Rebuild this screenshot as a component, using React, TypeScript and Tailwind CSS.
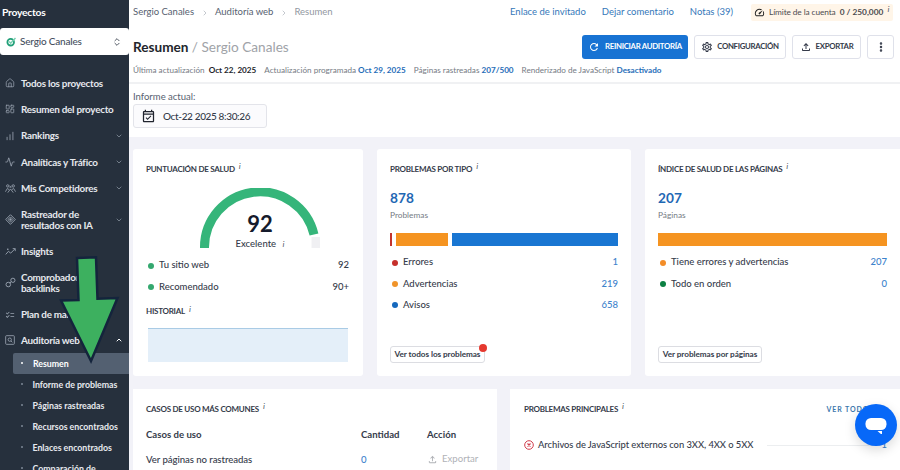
import type { ReactNode } from 'react';
import {
  Activity,
  ChartNoAxesColumnIncreasing,
  ChevronDown,
  ChevronRight,
  ChevronUp,
  ChevronsUpDown,
  EllipsisVertical,
  House,
  LayoutDashboard,
} from 'lucide-react';
import {
  MdOutlineChecklist,
  MdOutlineEventAvailable,
  MdOutlineFileUpload,
  MdOutlineSettings,
  MdOutlineSpeed,
  MdRefresh,
} from 'react-icons/md';

const icon = 'size-[10px] text-[#9aa4b1]';

const navItems = [
  { label: 'Todos los proyectos', icon: <House className={icon} strokeWidth={1.8} /> },
  { label: 'Resumen del proyecto', icon: <LayoutDashboard className={icon} strokeWidth={1.8} /> },
  { label: 'Rankings', icon: <ChartNoAxesColumnIncreasing className={icon} strokeWidth={2} />, chevron: true },
  { label: 'Analíticas y Tráfico', icon: <Activity className={icon} strokeWidth={2} />, chevron: true },
  { label: 'Mis Competidores', icon: <CompetitorsIcon />, chevron: true },
  { label: 'Rastreador de resultados con IA', icon: <AiIcon />, chevron: true, tall: true },
  { label: 'Insights', icon: <InsightsIcon /> },
  { label: 'Comprobador de backlinks', icon: <BacklinksIcon />, tall: true },
  { label: 'Plan de marketing', icon: <MdOutlineChecklist className={icon} /> },
];

const subItems = [
  'Informe de problemas',
  'Páginas rastreadas',
  'Recursos encontrados',
  'Enlaces encontrados',
  'Comparación de',
];

function CompetitorsIcon() {
  return (
    <svg viewBox="0 0 12 12" className="size-[11px] text-[#9aa4b1]" fill="none" stroke="currentColor" strokeWidth=".9">
      <circle cx="3" cy="3.2" r="1.3" />
      <circle cx="9" cy="3.2" r="1.3" />
      <path d="M.5 9.5 2.5 6l2 1.2M11.5 9.5 9.5 6l-2 1.2M3 10.5 6 6.5l3 4" />
      <path d="m5 3.5 2 1.5m0-1.5L5 5" />
    </svg>
  );
}

function AiIcon() {
  return (
    <svg viewBox="0 0 12 12" className="size-[11px] text-[#9aa4b1]" fill="none" stroke="currentColor">
      <path d="M6 .8 11.2 6 6 11.2.8 6Z" />
      <path d="M6 3.2 8.8 6 6 8.8 3.2 6Z" />
      <circle cx="6" cy="6" r=".8" fill="currentColor" />
    </svg>
  );
}

function InsightsIcon() {
  return (
    <svg viewBox="0 0 12 12" className="size-[11px] text-[#9aa4b1]" fill="none" stroke="currentColor">
      <path d="m.8 9.2 3-3.4 2.4 2 4.6-4.6" />
      <path d="M8.4 2.8h2.8v2.8M2.2 3.6h1.6M3 2.8v1.6" strokeWidth=".9" />
    </svg>
  );
}

function BacklinksIcon() {
  return (
    <svg viewBox="0 0 12 12" className="size-[11px] text-[#9aa4b1]" fill="none" stroke="currentColor">
      <circle cx="3.6" cy="8.2" r="2.5" />
      <circle cx="8.6" cy="3.6" r="2.3" />
      <path d="m5.2 6.6 1.8-1.6" />
    </svg>
  );
}

function AuditIcon() {
  return (
    <svg viewBox="0 0 12 12" className="size-[10px] text-[#9aa4b1]" fill="none" stroke="currentColor">
      <rect x=".8" y=".8" width="10.4" height="10.4" rx="1" />
      <circle cx="5.7" cy="5.6" r="2" />
      <path d="m7.2 7.2 1.6 1.6" />
    </svg>
  );
}

function Info({ className = '' }: { className?: string }) {
  return <span className={`ml-[4px] text-[8.5px] italic font-normal text-[#555b66] ${className}`}>i</span>;
}

function CardTitle({ children }: { children: ReactNode }) {
  return (
    <div className="flex h-[12px] items-center text-[8px] font-bold text-[#353b4a]">
      <span className="tracking-[-0.26px]">{children}</span>
      <Info className="-mt-[5px]" />
    </div>
  );
}

function Row({ dot, label, value, link = true }: { dot: string; label: string; value: string; link?: boolean }) {
  return (
    <div className="flex h-[21.2px] items-center text-[9.5px] font-medium text-[#353b4a]">
      <span className={`ml-[2px] mr-[5px] size-[6px] rounded-full ${dot}`} />
      <span>{label}</span>
      <span className={`ml-auto ${link ? 'text-[#3c82cc]' : ''}`}>{value}</span>
    </div>
  );
}

function Sidebar() {
  return (
    <aside className="relative h-full w-[129px] shrink-0 overflow-hidden bg-[#26303d] text-[9.9px] font-bold text-[#e6e9ee]">
      <div className="flex h-[28px] items-center pl-[2px] pb-[3px] text-[10.3px] tracking-[-0.25px] text-white">Proyectos</div>
      <div className="flex h-[27px] items-center rounded-[3px] bg-white pl-[6px] pr-[7px] font-medium text-[#454f60]">
        <svg viewBox="0 0 10 10" className="mr-[4px] size-[10px]" fill="none">
          <circle cx="4.7" cy="5.2" r="3.3" stroke="#22a079" strokeWidth="1.8" />
          <path d="m3.2 4.5 1.5 1.7L9.5 1" stroke="#77cfb0" strokeWidth="1.4" />
        </svg>
        <span className="text-[10px] tracking-[-0.2px]">Sergio Canales</span>
        <ChevronsUpDown className="ml-auto size-[10px] text-[#333b48]" />
      </div>
      <nav className="mt-[15px]">
        {navItems.map((item) => (
          <div key={item.label} className={`flex items-center pl-[5px] pr-[6px] ${item.tall ? 'h-[36.8px]' : 'h-[26.3px]'}`}>
            <span className="flex w-[16px] shrink-0">{item.icon}</span>
            <span className={`leading-[10.5px] tracking-[-0.25px] ${item.tall ? 'w-[78px]' : 'whitespace-nowrap'}`}>{item.label}</span>
            {item.chevron && <ChevronDown className="ml-auto size-[8px] text-[#9aa4b1]" />}
          </div>
        ))}
        <div className="flex h-[25px] items-center pl-[5px] pr-[6px]">
          <span className="w-[16px]"><AuditIcon /></span>
          <span className="tracking-[-0.25px]">Auditoría web</span>
          <ChevronUp className="ml-auto size-[8px] text-white" strokeWidth={3} />
        </div>
        <div className="ml-[13px] text-[8.8px] tracking-[-0.04px]">
          <div className="flex h-[21px] items-center rounded-l-[2px] bg-[#536071] pl-[8px] text-white">
            <span className="mr-[10px] size-[2px] rounded-full bg-white" />
            Resumen
          </div>
          {subItems.map((item) => (
            <div key={item} className="flex h-[21px] items-center whitespace-nowrap pl-[8px]">
              <span className="mr-[10px] size-[1.5px] rounded-full bg-[#7c8796]" />
              {item}
            </div>
          ))}
        </div>
      </nav>
      {/* Pointer to the active entry */}
      <svg viewBox="0 0 129 120" className="absolute left-0 top-[250px] h-[120px] w-[129px]">
        <path d="M77 8 96 7.2 97.5 48.8 117.5 48 91 111 61 50.5 78.5 50Z" fill="#3db05f" stroke="#14243c" strokeWidth="2.5" />
      </svg>
    </aside>
  );
}

function Header() {
  return (
    <header className="h-[84px] shrink-0 border-b-2 border-[#f0f1f3] bg-white pl-[4px]">
      <div className="flex h-[25px] items-center whitespace-nowrap text-[9.5px] text-[#566170]">
        <span>Sergio Canales</span>
        <ChevronRight className="mx-[6.5px] size-[8px] text-[#a7adb7]" />
        <span>Auditoría web</span>
        <ChevronRight className="mx-[6.5px] size-[8px] text-[#a7adb7]" />
        <span className="text-[#9298a1]">Resumen</span>
        <div className="ml-auto flex items-center gap-[16px] pr-[7px] text-[#3477b9]">
          <span>Enlace de invitado</span>
          <span>Dejar comentario</span>
          <span>Notas (39)</span>
          <div className="ml-[2px] flex h-[17px] w-[142px] items-center rounded-[2px] bg-[#fff5e8] pl-[3px] text-[8.3px] text-[#4c4c50]">
            <MdOutlineSpeed className="mr-[4px] size-[11px] shrink-0 text-[#222]" />
            <span className="tracking-[-0.1px]">Límite de la cuenta</span>
            <span className="ml-[4px] font-bold tracking-[0.02px]">0 / 250,000</span>
            <Info className="ml-[2px] -mt-[6px]" />
          </div>
        </div>
      </div>
      <div className="flex h-[37px] items-center pr-[6px]">
        <h1 className="pt-[7px] text-[13.6px] font-bold text-[#22252b]">
          Resumen <span className="font-normal text-[#a0a3a8]">/ Sergio Canales</span>
        </h1>
        <div className="ml-auto flex gap-[6px] pt-[6px] text-[7.8px] font-bold tracking-[-0.3px] text-[#353b4a]">
          <button className="flex h-[24px] w-[106px] items-center justify-center gap-[5px] whitespace-nowrap rounded-[3px] bg-[#1873d3] text-white">
            <MdRefresh className="size-[12px]" />
            REINICIAR AUDITORÍA
          </button>
          <button className="flex h-[24px] w-[92px] items-center justify-center gap-[4px] rounded-[3px] border border-[#dfe1ea]">
            <MdOutlineSettings className="size-[12px]" />
            CONFIGURACIÓN
          </button>
          <button className="flex h-[24px] w-[69px] items-center justify-center gap-[4px] rounded-[3px] border border-[#dfe1ea]">
            <MdOutlineFileUpload className="size-[12px]" />
            EXPORTAR
          </button>
          <button className="flex h-[24px] w-[27px] items-center justify-center rounded-[3px] border border-[#dfe1ea]">
            <EllipsisVertical className="size-[12px]" strokeWidth={3} />
          </button>
        </div>
      </div>
      <div className="flex h-[16px] items-center gap-[8px] whitespace-nowrap text-[8.14px] text-[#757b84]">
        <span>Última actualización <b className="ml-[2px] text-[#22252b]">Oct 22, 2025</b></span>
        <span>Actualización programada <b className="text-[#1f6db8]">Oct 29, 2025</b></span>
        <span>Páginas rastreadas <b className="text-[#1f6db8]">207/500</b></span>
        <span>Renderizado de JavaScript <b className="text-[#1f6db8]">Desactivado</b></span>
      </div>
    </header>
  );
}

function HealthCard() {
  return (
    <section className="h-[227px] w-[230px] shrink-0 rounded-[3px] bg-white px-[13px] pt-[14px]">
      <CardTitle>PUNTUACIÓN DE SALUD</CardTitle>
      <div className="relative mt-[13px] h-[60px]">
        <svg viewBox="0 0 122 60" className="absolute left-[53px] top-0 h-[60px] w-[122px]" fill="none" strokeWidth="9">
          <path d="M5.5 60A55.5 55.5 0 0 1 115 46.5" stroke="#35b57a" />
          <path d="M112.5 49H121V60H112.5Z" fill="#f0f0f3" stroke="none" />
        </svg>
        <div className="absolute left-[54px] top-[23px] w-[120px] text-center text-[22px] font-bold leading-[26px] text-[#151b2c]">92</div>
        <div className="absolute left-[54px] top-[50px] w-[120px] text-center text-[9.5px] font-medium leading-[12px] text-[#353b4a]">
          Excelente <Info className="ml-[2px]" />
        </div>
      </div>
      <div className="mt-[7px] pr-[1px]">
        <Row dot="bg-[#34a86f]" label="Tu sitio web" value="92" link={false} />
        <Row dot="bg-[#34a86f]" label="Recomendado" value="90+" link={false} />
      </div>
      <div className="mt-[8px]">
        <CardTitle>HISTORIAL</CardTitle>
      </div>
      <div className="ml-[2px] mt-[11px] h-[34px] w-[200px] border-t border-[#a9cbe5] bg-[#e4eff9]" />
    </section>
  );
}

function TypeCard() {
  return (
    <section className="h-[227px] w-[254px] shrink-0 rounded-[3px] bg-white px-[13px] pt-[14px]">
      <CardTitle>PROBLEMAS POR TIPO</CardTitle>
      <div className="mt-[14px] text-[13.7px] font-bold leading-[18px] text-[#1f68b4]">878</div>
      <div className="mt-[2px] text-[8.3px] leading-[12px] text-[#757b84]">Problemas</div>
      <div className="mt-[12px] flex h-[13px] gap-[4px]">
        <div className="w-[2px] bg-[#c3342f]" />
        <div className="w-[52px] bg-[#f59421]" />
        <div className="flex-1 bg-[#1976d2]" />
      </div>
      <div className="mt-[6px]">
        <Row dot="bg-[#c6302b]" label="Errores" value="1" />
        <Row dot="bg-[#f0942a]" label="Advertencias" value="219" />
        <Row dot="bg-[#1669bd]" label="Avisos" value="658" />
      </div>
      <button className="relative mt-[30px] block h-[17px] w-[95px] whitespace-nowrap rounded-[3px] border border-[#dcdde2] text-[8.2px] font-bold leading-[15px] tracking-[-0.06px] text-[#353b4a]">
        Ver todos los problemas
        <span className="absolute -right-[3px] -top-[3px] size-[8px] rounded-full bg-[#e5392f]" />
      </button>
    </section>
  );
}

function PagesCard() {
  return (
    <section className="h-[227px] w-[262px] shrink-0 rounded-[3px] bg-white pl-[13px] pr-[20px] pt-[14px]">
      <CardTitle>ÍNDICE DE SALUD DE LAS PÁGINAS</CardTitle>
      <div className="mt-[14px] text-[13.7px] font-bold leading-[18px] text-[#1f68b4]">207</div>
      <div className="mt-[2px] text-[8.3px] leading-[12px] text-[#757b84]">Páginas</div>
      <div className="mt-[12px] h-[13px] bg-[#f59421]" />
      <div className="mt-[6px]">
        <Row dot="bg-[#f38d28]" label="Tiene errores y advertencias" value="207" />
        <Row dot="bg-[#0c8043]" label="Todo en orden" value="0" />
      </div>
      <button className="mt-[52px] block h-[17px] w-[104px] whitespace-nowrap rounded-[3px] border border-[#dcdde2] text-[8.2px] font-bold leading-[15px] tracking-[-0.06px] text-[#353b4a]">
        Ver problemas por páginas
      </button>
    </section>
  );
}

export default function App() {
  return (
    <div className="relative flex h-[470px] w-[900px] overflow-hidden bg-[#f2f2f8] font-['Lato',sans-serif]">
      <Sidebar />
      <main className="flex min-w-0 flex-1 flex-col">
        <Header />
        <div className="h-[53px] shrink-0 bg-white pl-[4px] pt-[6px]">
          <div className="text-[9.5px] leading-[14px] text-[#566170]">Informe actual:</div>
          <div className="flex h-[24px] w-[134px] items-center rounded-[3px] border border-[#e3e4ea] bg-[#fbfbfd] pl-[7px] text-[10px] font-medium tracking-[-0.36px] text-[#353b4a]">
            <MdOutlineEventAvailable className="mr-[7px] size-[15px] text-[#20242e]" />
            Oct-22 2025 8:30:26
          </div>
        </div>
        <div className="mt-[12px] flex gap-[14px] pl-[4px]">
          <HealthCard />
          <TypeCard />
          <PagesCard />
        </div>
        <div className="mt-[13px] flex flex-1 gap-[13px] pl-[4px]">
          <section className="w-[364px] shrink-0 bg-white px-[13px] pt-[14px]">
            <CardTitle>CASOS DE USO MÁS COMUNES</CardTitle>
            <div className="mt-[7px] grid grid-cols-[215px_66px_1fr] text-[9.6px] text-[#353b4a]">
              <b className="leading-[25px]">Casos de uso</b>
              <b className="leading-[25px]">Cantidad</b>
              <b className="leading-[25px]">Acción</b>
              <span className="font-medium leading-[25px] tracking-[-0.06px]">Ver páginas no rastreadas</span>
              <span className="font-medium leading-[25px] text-[#3c82cc]">0</span>
              <span className="flex items-center gap-[4px] text-[#b0b2b7]">
                <MdOutlineFileUpload className="size-[11px]" />
                Exportar
              </span>
            </div>
          </section>
          <section className="w-[400px] shrink-0 bg-white pl-[14px] pt-[14px]">
            <div className="flex w-[363px] items-center justify-between">
              <CardTitle>PROBLEMAS PRINCIPALES</CardTitle>
              <span className="mr-[13px] text-[7px] font-bold leading-[12px] tracking-[0.9px] text-[#3c78ad]">VER TODOS</span>
            </div>
            <div className="mt-[24px] flex w-[363px] items-center whitespace-nowrap text-[9.4px] font-medium leading-[12px] tracking-[-0.05px] text-[#353b4a]">
              <svg viewBox="0 0 10 10" className="mr-[4px] size-[10px]" fill="none" stroke="#d13c4b">
                <circle cx="5" cy="5" r="4.3" />
                <path d="m3.5 3.5 3 3m0-3-3 3" strokeWidth="1.2" />
              </svg>
              Archivos de JavaScript externos con 3XX, 4XX o 5XX
              <span className="ml-[14px] h-px flex-1 bg-[#eceef0]" />
              <span className="ml-[4px] text-[#3c82cc]">1</span>
            </div>
          </section>
        </div>
      </main>
      {/* Chat launcher */}
      <div className="absolute left-[855px] top-[404px] flex size-[42px] items-center justify-center rounded-full bg-[#0768f8] shadow-[0_4px_12px_rgba(0,0,0,0.15)]">
        <svg viewBox="0 0 22 18" className="h-[18px] w-[22px]" fill="#fff">
          <rect x=".5" y="2" width="21" height="12" rx="5.5" />
          <path d="M12.5 15H17V19Z" />
        </svg>
      </div>
    </div>
  );
}
